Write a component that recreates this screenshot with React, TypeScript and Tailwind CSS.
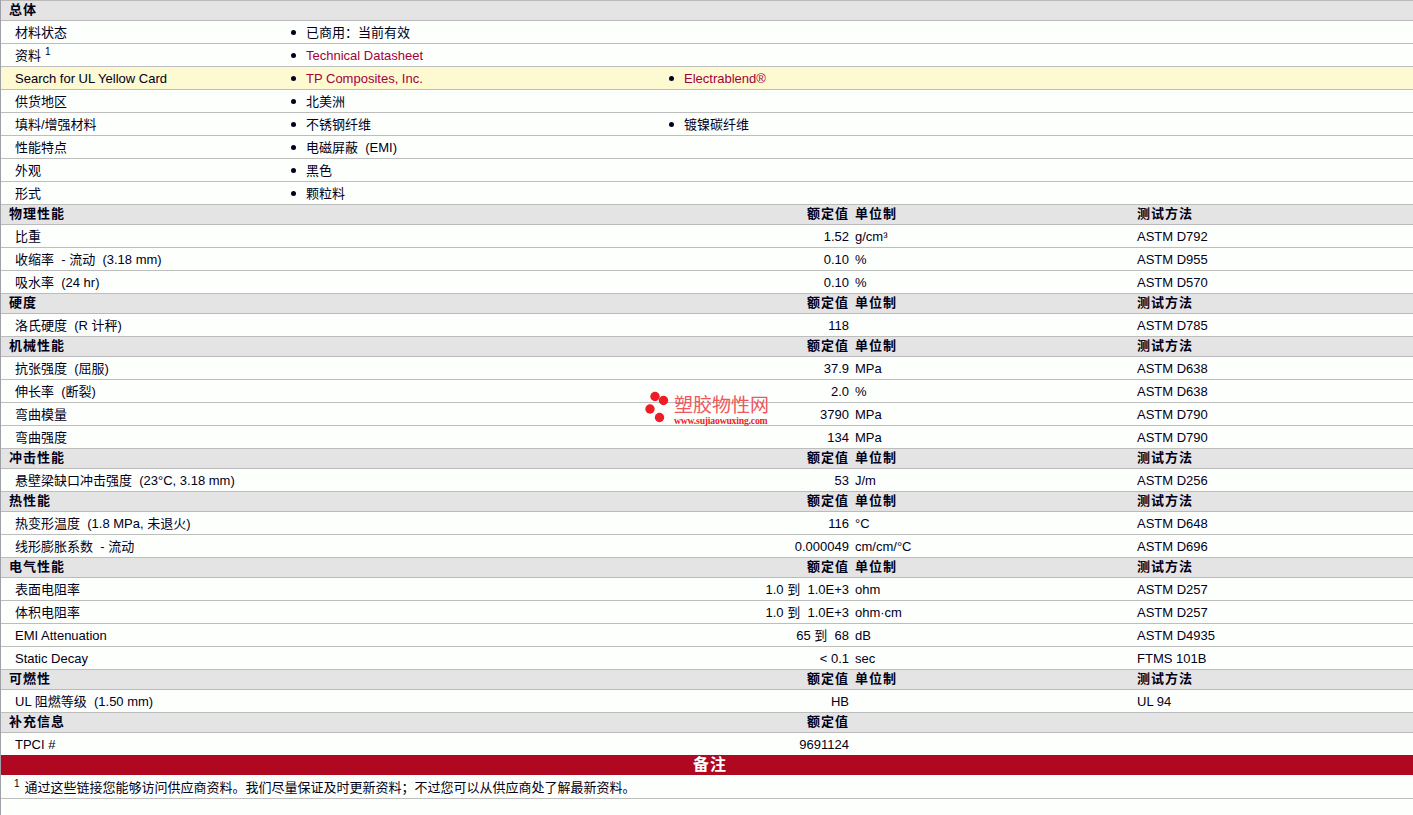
const FONT = '"Liberation Sans","Noto Sans CJK SC",sans-serif';

function Bullet() {
  return <span className="inline-block w-[5px] h-[5px] rounded-full bg-[#000020] shrink-0 mr-[10px]" />;
}

function Info({ label, sup, items, link, highlight }: { label: string; sup?: boolean; items: string[]; link?: boolean; highlight?: boolean }) {
  return (
    <div className={`grid grid-cols-[290px_378px_1fr] h-[23px] pt-[1px] items-center border-b border-[#bdbdbd] ${highlight ? 'bg-[#fdf9d0]' : ''}`}>
      <div className="pl-[14px] whitespace-nowrap relative">
        {label}
        {sup && <span className="absolute left-[44px] top-[-1px] text-[10px] leading-none">1</span>}
      </div>
      {items.map((t) => (
        <div key={t} className="flex items-center whitespace-pre">
          <Bullet />
          <span className={link ? 'text-[#a3003a]' : ''}>{t}</span>
        </div>
      ))}
    </div>
  );
}

function Head({ title, first, unit = true, test = true, value = true }: { title: string; first?: boolean; unit?: boolean; test?: boolean; value?: boolean }) {
  return (
    <div className={`grid grid-cols-[650px_198px_288px_1fr] items-center bg-[#e4e4e4] border-b border-[#bdb8bb] font-bold pb-[2px] ${first ? 'h-[21px] border-t' : 'h-[20px]'}`}>
      <div className="pl-[8px] tracking-[1px] whitespace-nowrap">{title}</div>
      <div className="text-right tracking-[1px] whitespace-nowrap">{value ? '额定值' : ''}</div>
      <div className="pl-[6px] tracking-[1px] whitespace-nowrap">{unit ? '单位制' : ''}</div>
      <div className="tracking-[1px] whitespace-nowrap">{test ? '测试方法' : ''}</div>
    </div>
  );
}

function Data({ label, value, unit = '', test = '', last }: { label: string; value: string; unit?: string; test?: string; last?: boolean }) {
  return (
    <div className={`grid grid-cols-[650px_198px_288px_1fr] items-center pt-[1px] ${last ? 'h-[22px]' : 'h-[23px] border-b border-[#bdbdbd]'}`}>
      <div className="pl-[14px] whitespace-pre">{label}</div>
      <div className="text-right whitespace-pre">{value}</div>
      <div className="pl-[6px] whitespace-nowrap">{unit}</div>
      <div className="whitespace-nowrap">{test}</div>
    </div>
  );
}

export default function App() {
  return (
    <div className="relative w-[1413px] h-[815px] overflow-hidden bg-[#fdfffd] border-l border-[#a0a0a8] text-[13px] leading-[16px] text-[#000018] border-solid" style={{ fontFamily: FONT }}>
      <Head title="总体" first unit={false} test={false} value={false} />
      <Info label="材料状态" items={['已商用：当前有效']} />
      <Info label="资料" sup items={['Technical Datasheet']} link />
      <Info label="Search for UL Yellow Card" items={['TP Composites, Inc.', 'Electrablend®']} link highlight />
      <Info label="供货地区" items={['北美洲']} />
      <Info label="填料/增强材料" items={['不锈钢纤维', '镀镍碳纤维']} />
      <Info label="性能特点" items={['电磁屏蔽  (EMI)']} />
      <Info label="外观" items={['黑色']} />
      <Info label="形式" items={['颗粒料']} />

      <Head title="物理性能" />
      <Data label="比重" value="1.52" unit="g/cm³" test="ASTM D792" />
      <Data label="收缩率  - 流动  (3.18 mm)" value="0.10" unit="%" test="ASTM D955" />
      <Data label="吸水率  (24 hr)" value="0.10" unit="%" test="ASTM D570" />

      <Head title="硬度" />
      <Data label="洛氏硬度  (R 计秤)" value="118" test="ASTM D785" />

      <Head title="机械性能" />
      <Data label="抗张强度  (屈服)" value="37.9" unit="MPa" test="ASTM D638" />
      <Data label="伸长率  (断裂)" value="2.0" unit="%" test="ASTM D638" />
      <Data label="弯曲模量" value="3790" unit="MPa" test="ASTM D790" />
      <Data label="弯曲强度" value="134" unit="MPa" test="ASTM D790" />

      <Head title="冲击性能" />
      <Data label="悬壁梁缺口冲击强度  (23°C, 3.18 mm)" value="53" unit="J/m" test="ASTM D256" />

      <Head title="热性能" />
      <Data label="热变形温度  (1.8 MPa, 未退火)" value="116" unit="°C" test="ASTM D648" />
      <Data label="线形膨胀系数  - 流动" value="0.000049" unit="cm/cm/°C" test="ASTM D696" />

      <Head title="电气性能" />
      <Data label="表面电阻率" value="1.0 到  1.0E+3" unit="ohm" test="ASTM D257" />
      <Data label="体积电阻率" value="1.0 到  1.0E+3" unit="ohm·cm" test="ASTM D257" />
      <Data label="EMI Attenuation" value="65 到  68" unit="dB" test="ASTM D4935" />
      <Data label="Static Decay" value="< 0.1" unit="sec" test="FTMS 101B" />

      <Head title="可燃性" />
      <Data label="UL 阻燃等级  (1.50 mm)" value="HB" test="UL 94" />

      <Head title="补充信息" unit={false} test={false} />
      <Data label="TPCI #" value="9691124" last />

      <div className="h-[20px] bg-[#b00820] text-[#fff] text-[16px] font-bold text-center tracking-[1px] leading-[19px] pl-[6px]">备注</div>
      <div className="h-[24px] flex items-center pl-[13px] pt-[3px] border-b border-[#bdbdbd] whitespace-nowrap">
        <span className="text-[10px] mr-[5px] leading-none mt-[-8px]">1</span>
        <span>通过这些链接您能够访问供应商资料。我们尽量保证及时更新资料；不过您可以从供应商处了解最新资料。</span>
      </div>

      <div className="absolute left-[644px] top-[390px] w-[125px] h-[34px] flex">
        <svg width="29" height="34" viewBox="0 0 29 34" className="shrink-0">
          <circle cx="10" cy="6.5" r="4.7" fill="#ee1c25" />
          <circle cx="18.5" cy="10.5" r="4.7" fill="#ee1c25" />
          <circle cx="5" cy="19" r="4.7" fill="#ee1c25" />
          <circle cx="14.5" cy="27.5" r="4.7" fill="#ee1c25" />
        </svg>
        <div className="flex flex-col">
          <span className="text-[19px] leading-[20px] mt-[6px] text-[#f0565b] whitespace-nowrap">塑胶物性网</span>
          <span className="text-[9.7px] leading-[9px] font-bold text-[#ee1c25] tracking-[-0.2px] whitespace-nowrap" style={{ fontFamily: '"Liberation Serif",serif' }}>www.sujiaowuxing.com</span>
        </div>
      </div>
    </div>
  );
}
